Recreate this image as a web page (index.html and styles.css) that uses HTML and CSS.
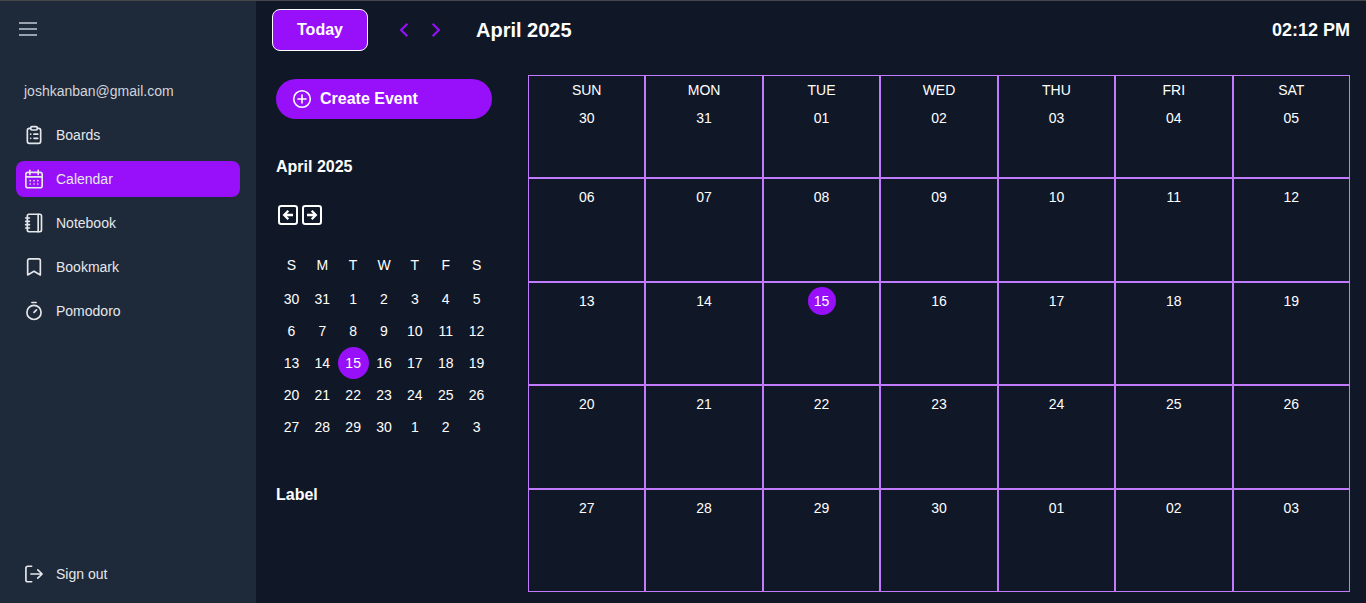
FILE: index.html
```html
<!DOCTYPE html>
<html lang="en">
<head>
<meta charset="utf-8">
<title>Calendar</title>
<link rel="stylesheet" href="styles.css">
</head>
<body>
<div class="app">
  <aside class="sidebar">
    <button class="menu" aria-label="Menu"><svg class="icon24" viewBox="0 0 24 24"><path d="M3 6h18M3 12h18M3 18h18"/></svg></button>
    <div class="email">joshkanban@gmail.com</div>
    <nav class="nav">
      <a class="nav-item"><svg class="icon20" viewBox="0 0 24 24"><path d="M8 4H6.500a2.500 2.500 0 0 0-2.500 2.500v13A2.500 2.500 0 0 0 6.500 22h11a2.500 2.500 0 0 0 2.500-2.500v-13A2.500 2.500 0 0 0 17.500 4H16M12 11h4.500M12 16h4.500M8 11h.01M8 16h.01"/><rect x="8" y="2" width="8" height="4" rx="1.500"/></svg>Boards</a>
      <a class="nav-item active"><svg class="icon20" viewBox="0 0 24 24"><rect x="2.200" y="4" width="19.600" height="18.500" rx="2.500"/><path d="M7 1.500v5M17 1.500v5M2.200 9.500h19.600M7.500 14h.01M12 14h.01M16.500 14h.01M7.500 18h.01M12 18h.01M16.500 18h.01"/></svg>Calendar</a>
      <a class="nav-item"><svg class="icon20" viewBox="0 0 24 24"><rect x="4" y="1.500" width="17" height="21" rx="2"/><path d="M17 1.500v21M2 6h4.500M2 10h4.500M2 14h4.500M2 18h4.500"/></svg>Notebook</a>
      <a class="nav-item"><svg class="icon20" viewBox="0 0 24 24"><path d="m19.600 21.500-7.600-4.300-7.600 4.300V4.300a2 2 0 0 1 2-2h11.200a2 2 0 0 1 2 2z"/></svg>Bookmark</a>
      <a class="nav-item"><svg class="icon20" viewBox="0 0 24 24"><path d="M9.500 1.800h5M12 13.700l3-3"/><circle cx="12" cy="13.700" r="8.500"/></svg>Pomodoro</a>
    </nav>
    <a class="nav-item sign-out"><svg class="icon20" viewBox="0 0 24 24"><path d="M9.200 2.700H4.500a2.200 2.200 0 0 0-2.200 2.200v14.200a2.200 2.200 0 0 0 2.200 2.200h4.700M8.300 12h13.500M16.500 7l5.300 5-5.300 5"/></svg>Sign out</a>
  </aside>
  <main class="main">
    <header class="toolbar">
      <button class="today">Today</button>
      <div class="arrows">
        <svg class="chevron" viewBox="0 0 24 24"><path d="M16 4.500 8.500 12l7.500 7.500"/></svg>
        <svg class="chevron" viewBox="0 0 24 24"><path d="m8 4.500 7.500 7.500-7.500 7.500"/></svg>
      </div>
      <h1 class="title">April 2025</h1>
      <div class="clock">02:12 PM</div>
    </header>
    <div class="content">
      <section class="panel">
        <button class="create"><svg class="icon24" viewBox="0 0 24 24"><path d="M12 8v8M8 12h8"/><circle cx="12" cy="12" r="8.300"/></svg>Create Event</button>
        <h2 class="heading">April 2025</h2>
        <div class="steps">
          <svg class="step" viewBox="0 0 24 24"><rect x="3" y="3" width="18" height="18" rx="2.200"/><path d="M17 12H8.500M12.300 7.800 8.200 12l4.100 4.200"/></svg>
          <svg class="step" viewBox="0 0 24 24"><rect x="3" y="3" width="18" height="18" rx="2.200"/><path d="M7 12h8.500M11.700 7.800l4.100 4.200-4.100 4.200"/></svg>
        </div>
        <div class="mini-week mini-grid"><span>S</span><span>M</span><span>T</span><span>W</span><span>T</span><span>F</span><span>S</span></div>
        <div class="mini-days mini-grid">
          <span>30</span><span>31</span><span>1</span><span>2</span><span>3</span><span>4</span><span>5</span>
          <span>6</span><span>7</span><span>8</span><span>9</span><span>10</span><span>11</span><span>12</span>
          <span>13</span><span>14</span><span class="current">15</span><span>16</span><span>17</span><span>18</span><span>19</span>
          <span>20</span><span>21</span><span>22</span><span>23</span><span>24</span><span>25</span><span>26</span>
          <span>27</span><span>28</span><span>29</span><span>30</span><span>1</span><span>2</span><span>3</span>
        </div>
        <h2 class="label">Label</h2>
      </section>
      <section class="month">
        <div class="cell"><div class="weekday">SUN</div><div class="date">30</div></div>
        <div class="cell"><div class="weekday">MON</div><div class="date">31</div></div>
        <div class="cell"><div class="weekday">TUE</div><div class="date">01</div></div>
        <div class="cell"><div class="weekday">WED</div><div class="date">02</div></div>
        <div class="cell"><div class="weekday">THU</div><div class="date">03</div></div>
        <div class="cell"><div class="weekday">FRI</div><div class="date">04</div></div>
        <div class="cell"><div class="weekday">SAT</div><div class="date">05</div></div>
        <div class="cell"><div class="date">06</div></div>
        <div class="cell"><div class="date">07</div></div>
        <div class="cell"><div class="date">08</div></div>
        <div class="cell"><div class="date">09</div></div>
        <div class="cell"><div class="date">10</div></div>
        <div class="cell"><div class="date">11</div></div>
        <div class="cell"><div class="date">12</div></div>
        <div class="cell"><div class="date">13</div></div>
        <div class="cell"><div class="date">14</div></div>
        <div class="cell"><div class="date current">15</div></div>
        <div class="cell"><div class="date">16</div></div>
        <div class="cell"><div class="date">17</div></div>
        <div class="cell"><div class="date">18</div></div>
        <div class="cell"><div class="date">19</div></div>
        <div class="cell"><div class="date">20</div></div>
        <div class="cell"><div class="date">21</div></div>
        <div class="cell"><div class="date">22</div></div>
        <div class="cell"><div class="date">23</div></div>
        <div class="cell"><div class="date">24</div></div>
        <div class="cell"><div class="date">25</div></div>
        <div class="cell"><div class="date">26</div></div>
        <div class="cell"><div class="date">27</div></div>
        <div class="cell"><div class="date">28</div></div>
        <div class="cell"><div class="date">29</div></div>
        <div class="cell"><div class="date">30</div></div>
        <div class="cell"><div class="date">01</div></div>
        <div class="cell"><div class="date">02</div></div>
        <div class="cell"><div class="date">03</div></div>
      </section>
    </div>
  </main>
</div>
</body>
</html>
```

FILE: styles.css
```css
* { box-sizing: border-box; margin: 0; padding: 0; }
body { background: #101828; color: #fff; font: 14px/20px "Liberation Sans", Arial, sans-serif; }
button { font: inherit; color: inherit; border: 0; background: none; }
svg { display: block; flex: none; fill: none; stroke: currentColor; stroke-linecap: round; stroke-linejoin: round; stroke-width: 1.5; }
.app { display: flex; height: 603px; border-top: 1px solid #45474b; }
.sidebar { width: 256px; padding: 16px; background: #1e2939; color: #e5e7eb; display: flex; flex-direction: column; }
.menu { align-self: flex-start; color: #99a1af; }
.menu .icon24 { stroke-width: 2; stroke-linecap: butt; }
.icon24 { width: 24px; height: 24px; }
.icon20 { width: 20px; height: 20px; stroke-width: 2; }
.email { margin: 40px 8px 16px; color: #d1d5dc; }
.nav { display: flex; flex-direction: column; gap: 8px; }
.nav-item { display: flex; align-items: center; gap: 12px; height: 36px; padding: 0 8px; border-radius: 8px; }
.active { background: #9810fa; }
.sign-out { margin-top: auto; margin-bottom: -5px; }
.main { flex: 1; display: flex; flex-direction: column; padding: 8px 16px 11px; }
.toolbar { display: flex; align-items: center; height: 42px; }
.today { width: 96px; height: 42px; border: 1px solid #fff; border-radius: 8px; background: #9810fa; font-size: 16px; font-weight: 700; }
.arrows { display: flex; gap: 12px; margin-left: 26px; color: #9810fa; }
.chevron { width: 20px; height: 20px; stroke-width: 2.5; stroke-linecap: butt; stroke-linejoin: miter; }
.title { margin-left: 30px; font-size: 20px; line-height: 28px; }
.clock { margin-left: auto; font-size: 18px; font-weight: 700; line-height: 28px; }
.content { flex: 1; display: flex; margin-top: 24px; }
.panel { width: 224px; margin-right: 32px; padding: 4px 4px 0; }
.create { display: flex; align-items: center; gap: 6px; width: 216px; height: 40px; padding: 0 14px 1px; border-radius: 20px; background: #9810fa; font-size: 16px; font-weight: 700; }
.create .icon24 { stroke-width: 1.6; }
.heading { margin-top: 36px; font-size: 16px; line-height: 24px; }
.steps { display: flex; margin-top: 24px; }
.step { width: 24px; height: 24px; stroke-width: 2; }
.step path { stroke-width: 2.3; stroke-linecap: butt; stroke-linejoin: miter; }
.mini-grid { display: grid; grid-template-columns: repeat(7, 1fr); text-align: center; }
.mini-week { margin-top: 28px; }
.mini-days { margin-top: 8px; grid-auto-rows: 32px; line-height: 32px; }
.current { background: #9810fa; border-radius: 50%; }
.label { margin-top: 40px; font-size: 16px; line-height: 24px; }
.month { flex: 1; display: grid; grid-template-columns: repeat(7, 1fr); grid-template-rows: repeat(5, 1fr); }
.cell { border: 1px solid #c27aff; display: flex; flex-direction: column; align-items: center; padding-top: 4px; }
.weekday { margin-bottom: 4px; }
.date { width: 28px; height: 28px; line-height: 28px; text-align: center; }
```
